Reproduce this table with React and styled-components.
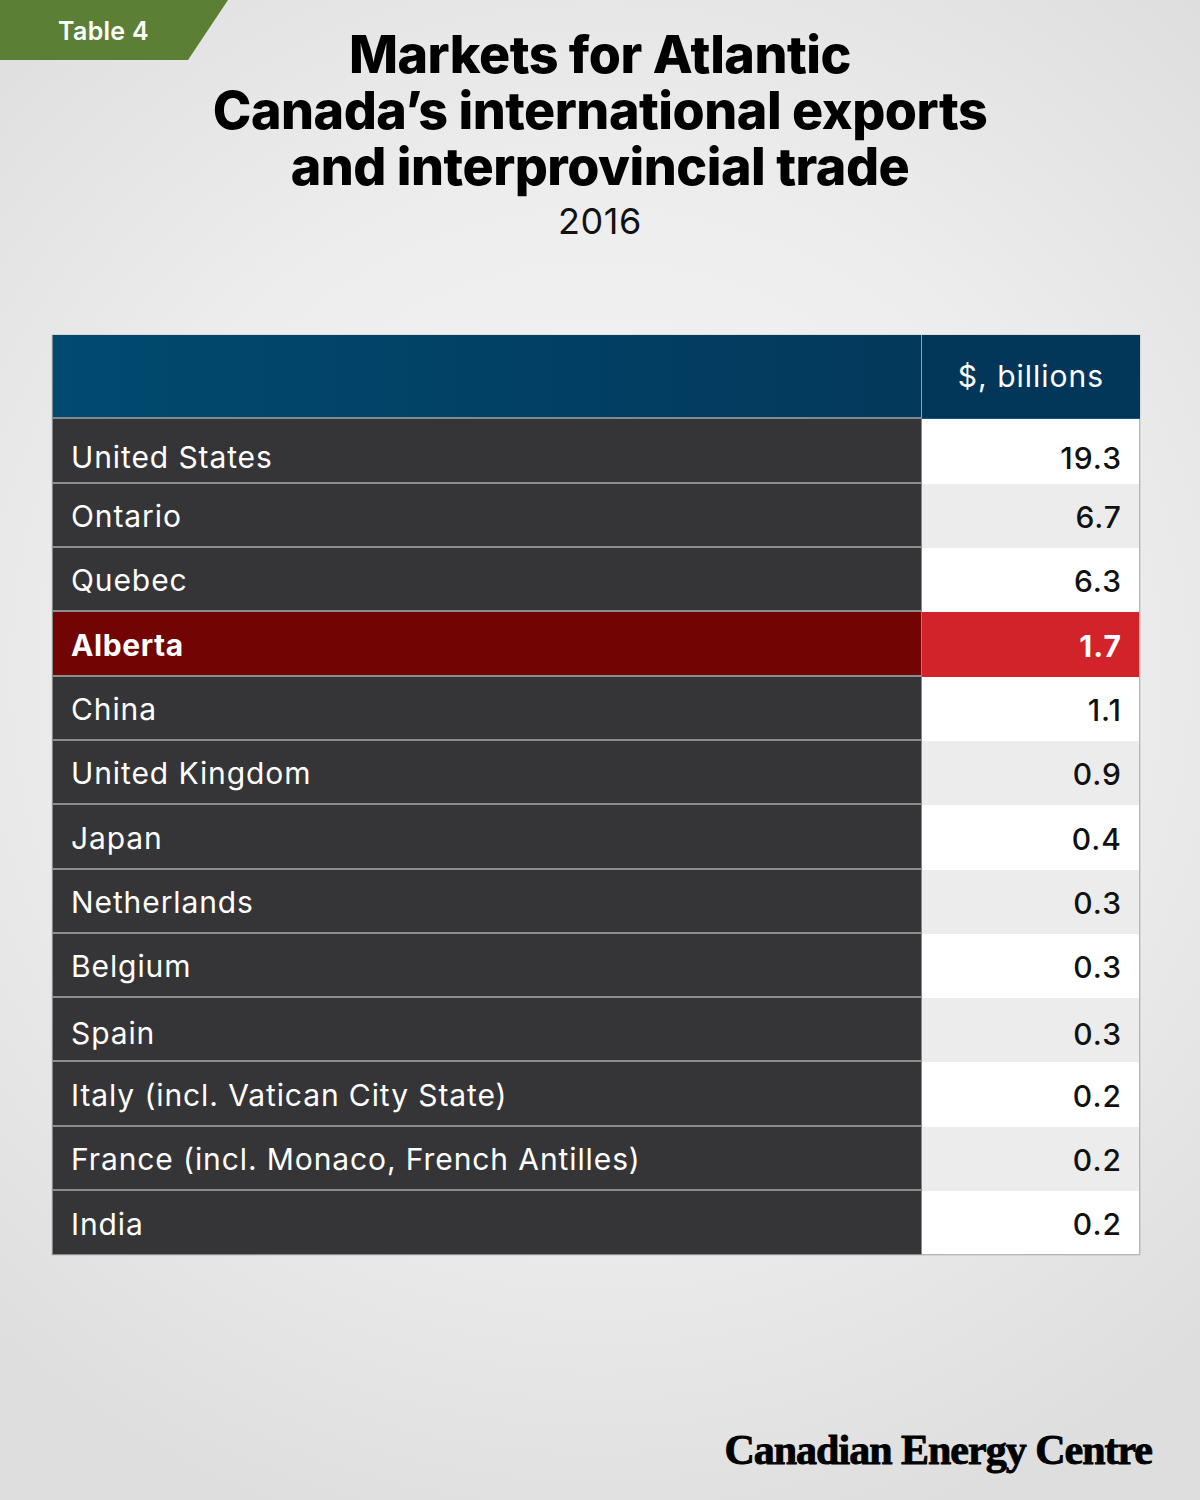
import React from "react";
import styled, { createGlobalStyle } from "styled-components";

const Global = createGlobalStyle`
  html, body { margin: 0; padding: 0; }
  body { font-family: Inter, "Noto Sans", sans-serif; }
`;

const Page = styled.div`
  position: relative;
  width: 1200px;
  height: 1500px;
  box-sizing: border-box;
  padding-top: 27px;
  background: radial-gradient(ellipse 75% 60% at 50% 45%, #f6f6f6 0%, #ededed 55%, #dedede 100%);
  overflow: hidden;
  display: flex;
  flex-direction: column;
`;

const Tag = styled.div`
  position: absolute;
  top: 0;
  left: 0;
  width: 228px;
  height: 60px;
  background: #5b7f35;
  clip-path: polygon(0 0, 228px 0, 188px 60px, 0 60px);
  color: #fff;
  font-family: Inter, sans-serif;
  font-weight: 600;
  font-size: 25px;
  letter-spacing: 0.3px;
  line-height: 62px;
  padding-left: 58px;
  box-sizing: border-box;
`;

const Title = styled.h1`
  margin: 0;
  text-align: center;
  font-family: Inter, sans-serif;
  font-weight: 800;
  font-size: 52px;
  line-height: 56px;
  letter-spacing: -0.5px;
  color: #000;
`;

const Year = styled.div`
  text-align: center;
  font-family: Inter, sans-serif;
  font-weight: 400;
  font-size: 36px;
  letter-spacing: 0.6px;
  line-height: 40px;
  color: #111;
  margin-top: 6px;
`;

const Table = styled.div`
  margin: 94px 0 0 52px;
  width: 1088px;
  display: grid;
  grid-template-columns: 869px 219px;
  box-shadow: 0 0 0 0.5px rgba(0,0,0,0.15);
`;

const HeadLeft = styled.div`
  height: 84px;
  background: linear-gradient(90deg, #014a70 0%, #023f64 60%, #03395b 100%);
  border-bottom: 2px solid #7f8a92;
  border-left: 1px solid #7c8a94;
  box-sizing: border-box;
`;

const HeadRight = styled.div`
  height: 84px;
  background: #02375a;
  border-left: 1px solid #8aa3b3;
  border-bottom: 1px solid #0a5a86;
  box-sizing: border-box;
  color: #fff;
  font-family: Inter, sans-serif;
  font-size: 30px;
  letter-spacing: 1px;
  font-weight: 400;
  display: flex;
  align-items: center;
  justify-content: center;
  padding-bottom: 2px;
`;

const NameCell = styled.div`
  height: ${(p) => p.$h}px;
  box-sizing: border-box;
  background: ${(p) => (p.$hl ? "#720404" : "#353537")};
  border-left: 1px solid #8a8a8a;
  border-bottom: ${(p) => (p.$last ? "1px solid #8a8a8a" : "2px solid #8c8c8c")};
  color: #fff;
  font-family: Inter, sans-serif;
  font-size: 30px;
  letter-spacing: ${(p) => (p.$hl ? 0.6 : 0.9)}px;
  font-weight: ${(p) => (p.$hl ? 700 : 400)};
  display: flex;
  align-items: center;
  padding-left: 18px;
  padding-top: ${(p) => p.$pt || 0}px;
`;

const ValueCell = styled.div`
  height: ${(p) => p.$h}px;
  box-sizing: border-box;
  background: ${(p) => (p.$hl ? "#d2232a" : p.$alt ? "#ececec" : "#ffffff")};
  border-left: 1px solid #8a8a8a;
  border-right: 1px solid #b5b5b5;
  border-bottom: ${(p) => (p.$last ? "1px solid #b5b5b5" : "none")};
  color: ${(p) => (p.$hl ? "#fff" : "#111")};
  font-family: Inter, sans-serif;
  font-size: 30px;
  letter-spacing: 1px;
  font-weight: ${(p) => (p.$hl ? 700 : 500)};
  display: flex;
  align-items: center;
  justify-content: flex-end;
  padding-right: 17px;
  padding-top: ${(p) => p.$pt || 0}px;
`;

const Footer = styled.div`
  margin-top: auto;
  padding: 0 48px 26px 0;
  display: flex;
  justify-content: flex-end;
`;

const Logo = styled.div`
  font-family: "Liberation Serif", "DejaVu Serif", serif;
  font-weight: 700;
  font-size: 42px;
  letter-spacing: -1px;
  color: #000;
  -webkit-text-stroke: 0.9px #000;
`;

const rows = [
  ["United States", "19.3"],
  ["Ontario", "6.7"],
  ["Quebec", "6.3"],
  ["Alberta", "1.7", true],
  ["China", "1.1"],
  ["United Kingdom", "0.9"],
  ["Japan", "0.4"],
  ["Netherlands", "0.3"],
  ["Belgium", "0.3"],
  ["Spain", "0.3"],
  ["Italy (incl. Vatican City State)", "0.2"],
  ["France (incl. Monaco, French Antilles)", "0.2"],
  ["India", "0.2"],
];

const heights = [65, 64, 64, 65, 64, 64, 65, 64, 64, 64, 65, 64, 64];

export default function App() {
  return (
    <>
      <Global />
      <Page>
        <Tag>Table 4</Tag>
        <Title>
          Markets for Atlantic
          <br />
          Canada’s international exports
          <br />
          and interprovincial trade
        </Title>
        <Year>2016</Year>
        <Table>
          <HeadLeft />
          <HeadRight>$, billions</HeadRight>
          {rows.map(([name, val, hl], i) => {
            const last = i === rows.length - 1;
            const pt = i === 0 ? 12 : i === 9 ? 8 : 2;
            return (
              <React.Fragment key={name}>
                <NameCell $h={heights[i]} $hl={hl} $last={last} $pt={pt}>
                  {name}
                </NameCell>
                <ValueCell $h={heights[i]} $hl={hl} $alt={i % 2 === 1} $last={last} $pt={pt}>
                  {val}
                </ValueCell>
              </React.Fragment>
            );
          })}
        </Table>
        <Footer>
          <Logo>Canadian Energy Centre</Logo>
        </Footer>
      </Page>
    </>
  );
}
